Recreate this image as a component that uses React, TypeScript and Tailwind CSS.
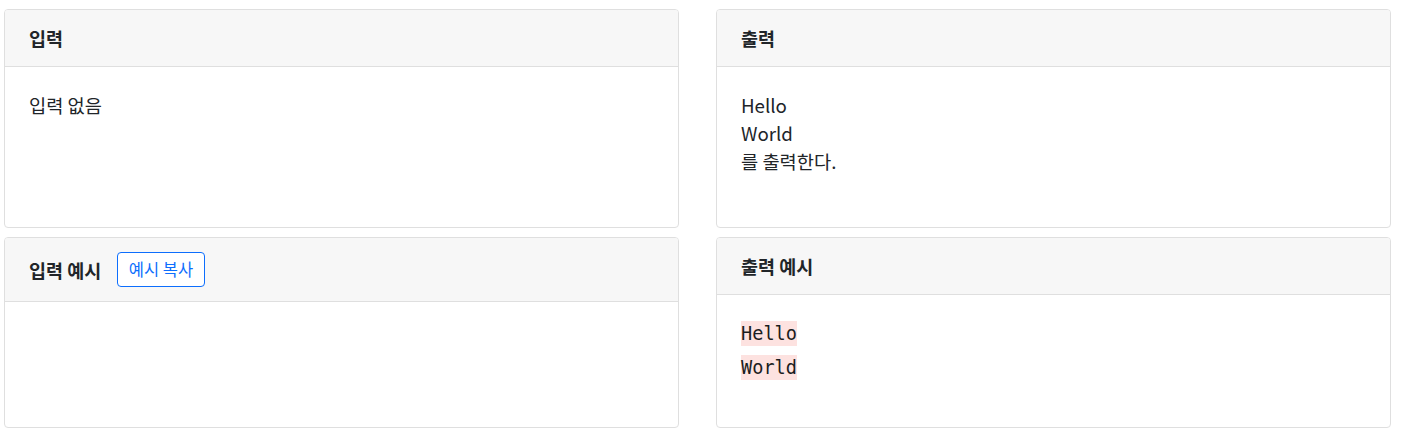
const FONT = "font-['Noto_Sans_CJK_KR','Noto_Sans',sans-serif]";

function Card({
  title,
  action,
  children,
  headerClass = 'py-4',
  bodyClass = 'pt-6',
}: {
  title: string;
  action?: React.ReactNode;
  children?: React.ReactNode;
  headerClass?: string;
  bodyClass?: string;
}) {
  return (
    <section className="flex flex-col rounded-[4px] border border-[#dfdfdf] bg-white overflow-hidden">
      <header className={`flex items-center gap-4 border-b border-[#dfdfdf] bg-[#f7f7f7] px-6 ${headerClass}`}>
        <h3 className="text-[18.5px] leading-6 font-bold text-[#212529]">{title}</h3>
        {action}
      </header>
      <div className={`flex-1 px-6 text-[18.7px] leading-[28px] text-[#212529] ${bodyClass}`}>{children}</div>
    </section>
  );
}

export default function App() {
  return (
    <div className={`${FONT} bg-white w-[1402px] h-[439px] pl-[4px] pt-[9px]`}>
      <div className="grid grid-cols-[675px_675px] grid-rows-[219px_191px] gap-x-[37px] gap-y-[9px]">
        <Card title="입력">
          <p>입력 없음</p>
        </Card>
        <Card title="출력">
          <p>
            Hello
            <br />
            World
            <br />를 출력한다.
          </p>
        </Card>
        <Card
          title="입력 예시"
          headerClass="py-[14px]"
          action={
            <button className="h-[35px] rounded-[4px] border border-[#0d6efd] bg-white px-[10.5px] text-[16.5px] text-[#0d6efd]">
              예시 복사
            </button>
          }
        />
        <Card title="출력 예시" bodyClass="pt-[22px]">
          <pre className="font-['DejaVu_Sans_Mono',monospace] text-[18.6px] leading-[34px] text-[#1a1d21]">
            <span className="bg-[#fde2e0] py-[2px]">Hello</span>
            {'\n'}
            <span className="bg-[#fde2e0] py-[2px]">World</span>
          </pre>
        </Card>
      </div>
    </div>
  );
}
